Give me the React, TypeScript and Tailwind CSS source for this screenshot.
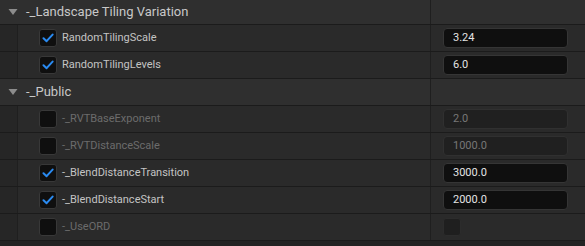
import React from "react";

type Row = {
  label: string;
  checked: boolean;
  enabled: boolean;
  value?: string;
};

const sections: { title: string; rows: Row[] }[] = [
  {
    title: "-_Landscape Tiling Variation",
    rows: [
      { label: "RandomTilingScale", checked: true, enabled: true, value: "3.24" },
      { label: "RandomTilingLevels", checked: true, enabled: true, value: "6.0" },
    ],
  },
  {
    title: "-_Public",
    rows: [
      { label: "-_RVTBaseExponent", checked: false, enabled: false, value: "2.0" },
      { label: "-_RVTDistanceScale", checked: false, enabled: false, value: "1000.0" },
      { label: "-_BlendDistanceTransition", checked: true, enabled: true, value: "3000.0" },
      { label: "-_BlendDistanceStart", checked: true, enabled: true, value: "2000.0" },
      { label: "-_UseORD", checked: false, enabled: false },
    ],
  },
];

function Check({ checked }: { checked: boolean }) {
  return (
    <div className="flex h-[18px] w-[18px] items-center justify-center rounded-[3px] border border-[#383838] bg-[#0f0f0f]">
      {checked ? (
        <svg width="12" height="12" viewBox="0 0 12 12">
          <path d="M1.5 6.2 L4.6 9.2 L10.6 2.6" fill="none" stroke="#2a8bf2" strokeWidth="2" strokeLinecap="round" strokeLinejoin="round" />
        </svg>
      ) : null}
    </div>
  );
}

function Header({ title, first }: { title: string; first?: boolean }) {
  return (
    <div className={`flex border-b border-[#1b1b1b] bg-[#2f2f2f] ${first ? "h-[25px]" : "h-[27px]"}`}>
      <div className="flex w-[431px] items-center border-r border-[#1f1f1f] pl-[8px]">
        <svg width="10" height="8" viewBox="0 0 10 8" className="mr-[8px]">
          <path d="M0.5 1 L9.5 1 L5 7 Z" fill="#8c8c8c" />
        </svg>
        <span className="text-[13px] text-[#c8c8c8]">{title}</span>
      </div>
      <div className="flex-1" />
    </div>
  );
}

function PropRow({ row }: { row: Row }) {
  const text = row.enabled ? "text-[#c4c4c4]" : "text-[#6c6c6c]";
  return (
    <div className="flex h-[27px] border-b border-[#1b1b1b] bg-[#2a2a2a]">
      <div className="w-[18px] border-r border-[#1f1f1f] bg-[#262626]" />
      <div className="flex w-[413px] items-center border-r border-[#1f1f1f] pl-[21px]">
        <Check checked={row.checked} />
        <span className={`ml-[5px] text-[11px] ${text}`}>{row.label}</span>
      </div>
      <div className="flex flex-1 items-center pl-[12px]">
        {row.value !== undefined ? (
          <div
            className={`flex h-[20px] w-[125px] items-center rounded-[4px] border pl-[9px] text-[11px] ${
              row.enabled
                ? "border-[#353535] bg-[#0f0f0f] text-[#e4e4e4]"
                : "border-[#303030] bg-[#202020] text-[#777777]"
            }`}
          >
            {row.value}
          </div>
        ) : (
          <div className="h-[18px] w-[18px] rounded-[3px] border border-[#2c2c2c] bg-[#1f1f1f]" />
        )}
      </div>
    </div>
  );
}

export default function App() {
  return (
    <div className="h-[246px] w-[585px] overflow-hidden bg-[#232323]" style={{ fontFamily: "Roboto, 'Noto Sans', sans-serif" }}>
      {sections.map((s, i) => (
        <div key={s.title}>
          <Header title={s.title} first={i === 0} />
          {s.rows.map((r) => (
            <PropRow key={r.label} row={r} />
          ))}
        </div>
      ))}
    </div>
  );
}
